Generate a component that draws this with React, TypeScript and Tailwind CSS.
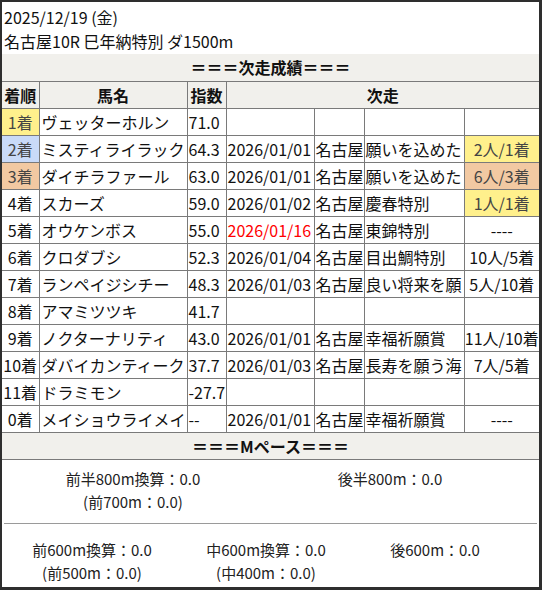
import React from "react";

type Row = {
  rank: string;
  rankBg?: string;
  name: string;
  idx: string;
  date?: string;
  red?: boolean;
  place?: string;
  race?: string;
  res?: string;
  resBg?: string;
};

const YEL = "bg-[#fff08c]";
const BLUE = "bg-[#c9daf8]";
const PEACH = "bg-[#f2c9a2]";

const rows: Row[] = [
  { rank: "1着", rankBg: YEL, name: "ヴェッターホルン", idx: "71.0" },
  { rank: "2着", rankBg: BLUE, name: "ミスティライラック", idx: "64.3", date: "2026/01/01", place: "名古屋", race: "願いを込めた", res: "2人/1着", resBg: YEL },
  { rank: "3着", rankBg: PEACH, name: "ダイチラファール", idx: "63.0", date: "2026/01/01", place: "名古屋", race: "願いを込めた", res: "6人/3着", resBg: PEACH },
  { rank: "4着", name: "スカーズ", idx: "59.0", date: "2026/01/02", place: "名古屋", race: "慶春特別", res: "1人/1着", resBg: YEL },
  { rank: "5着", name: "オウケンボス", idx: "55.0", date: "2026/01/16", red: true, place: "名古屋", race: "東錦特別", res: "----" },
  { rank: "6着", name: "クロダブシ", idx: "52.3", date: "2026/01/04", place: "名古屋", race: "目出鯛特別", res: "10人/5着" },
  { rank: "7着", name: "ランペイジシチー", idx: "48.3", date: "2026/01/03", place: "名古屋", race: "良い将来を願", res: "5人/10着" },
  { rank: "8着", name: "アマミツツキ", idx: "41.7" },
  { rank: "9着", name: "ノクターナリティ", idx: "43.0", date: "2026/01/01", place: "名古屋", race: "幸福祈願賞", res: "11人/10着" },
  { rank: "10着", name: "ダバイカンティーク", idx: "37.7", date: "2026/01/03", place: "名古屋", race: "長寿を願う海", res: "7人/5着" },
  { rank: "11着", name: "ドラミモン", idx: "-27.7" },
  { rank: "0着", name: "メイショウライメイ", idx: "--", date: "2026/01/01", place: "名古屋", race: "幸福祈願賞", res: "----" },
];

const cell = "border-b border-r border-[#7a7a7a] h-[27px] p-0 whitespace-nowrap overflow-hidden align-middle";
const lastCell = "border-b border-[#7a7a7a] h-[27px] p-0 whitespace-nowrap overflow-hidden align-middle";

export default function App() {
  return (
    <div
      className="w-[542px] h-[590px] bg-white text-[#111] border-t-2 border-l-2 border-r-[3px] border-b-[3px] border-[#2e2e2e] overflow-hidden"
      style={{ fontFamily: '"Noto Sans CJK JP", "Noto Sans", sans-serif' }}
    >
      <div className="pt-[3px] pb-[1px] pl-[2px] text-[16px] leading-[24px]">
        <div>2025/12/19 (金)</div>
        <div>名古屋10R 巳年納特別 ダ1500m</div>
      </div>
      <table className="w-[537px] table-fixed border-collapse text-[16px] leading-[22px]">
        <colgroup>
          <col className="w-[37px]" />
          <col className="w-[148px]" />
          <col className="w-[39px]" />
          <col className="w-[88px]" />
          <col className="w-[50px]" />
          <col className="w-[100px]" />
          <col className="w-[75px]" />
        </colgroup>
        <tbody>
          <tr className="bg-[#f1f0ec]">
            <td colSpan={7} className={lastCell + " text-center font-bold h-[27px]"}>
              ＝＝＝次走成績＝＝＝
            </td>
          </tr>
          <tr className="bg-[#f1f0ec] font-bold">
            <td className={cell + " text-center"}>着順</td>
            <td className={cell + " text-center"}>馬名</td>
            <td className={cell + " text-center"}>指数</td>
            <td colSpan={4} className={lastCell + " text-center"}>次走</td>
          </tr>
          {rows.map((r) => (
            <tr key={r.rank}>
              <td className={cell + " text-center " + (r.rankBg ? r.rankBg + " text-[#444]" : "")}>{r.rank}</td>
              <td className={cell + " pl-[2px]"}>{r.name}</td>
              <td className={cell + " pl-[1px]"}>{r.idx}</td>
              <td className={cell + " pl-[1px] " + (r.red ? "text-[#ff0000]" : "")}>{r.date ?? ""}</td>
              <td className={cell + " pl-[1px]"}>{r.place ?? ""}</td>
              <td className={cell + " pl-[1px] text-clip"}>{r.race ?? ""}</td>
              <td className={lastCell + " text-center " + (r.resBg ? r.resBg + " text-[#444]" : "")}>{r.res ?? ""}</td>
            </tr>
          ))}
          <tr className="bg-[#f1f0ec]">
            <td colSpan={7} className={lastCell + " text-center font-bold"}>
              ＝＝＝Mペース＝＝＝
            </td>
          </tr>
        </tbody>
      </table>
      <div className="text-[15px] leading-[23px] text-[#222]">
        <div className="flex pt-[7px] pb-[10px]">
          <div className="w-[262px] flex flex-col items-center">
            <div>前半800m換算：0.0</div>
            <div>(前700m：0.0)</div>
          </div>
          <div className="w-[252px] flex flex-col items-center">
            <div>後半800m：0.0</div>
          </div>
        </div>
        <div className="mx-[2px] border-t border-[#9a9a9a]" />
        <div className="flex pt-[14px]">
          <div className="w-[180px] flex flex-col items-center">
            <div>前600m換算：0.0</div>
            <div>(前500m：0.0)</div>
          </div>
          <div className="w-[168px] flex flex-col items-center">
            <div>中600m換算：0.0</div>
            <div>(中400m：0.0)</div>
          </div>
          <div className="w-[170px] flex flex-col items-center">
            <div>後600m：0.0</div>
          </div>
        </div>
      </div>
    </div>
  );
}
